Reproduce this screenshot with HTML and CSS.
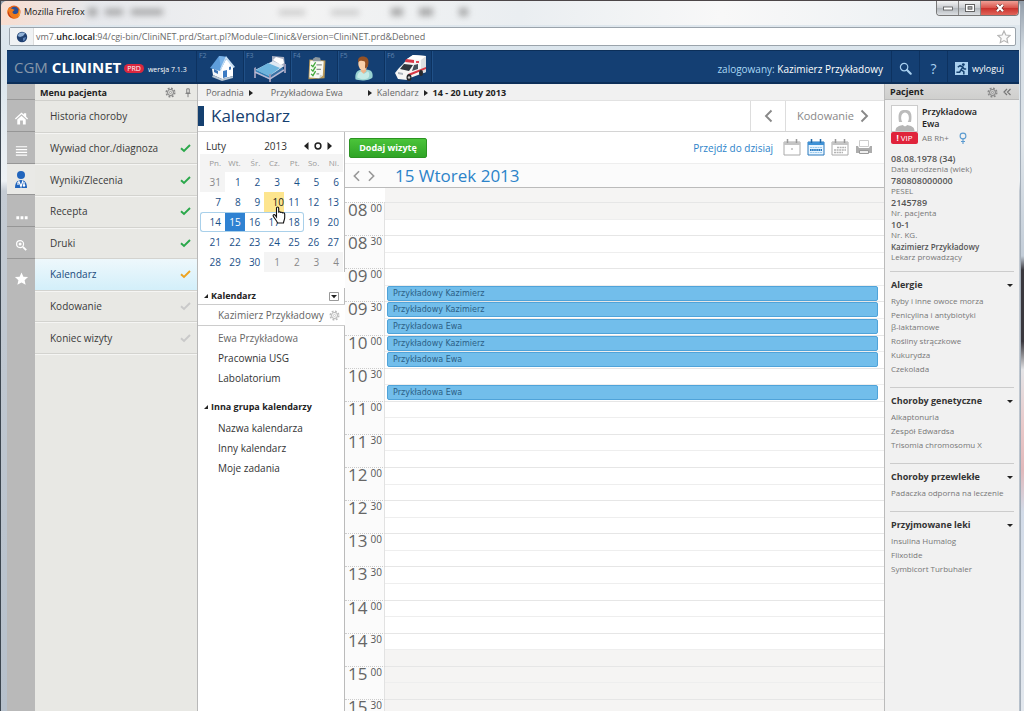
FILE: index.html
```html
<!DOCTYPE html>
<html lang="pl">
<head>
<meta charset="utf-8">
<title>Mozilla Firefox</title>
<link rel="stylesheet" href="styles.css">
</head>
<body>
<svg class="defs" aria-hidden="true">
  <symbol id="gear" viewBox="0 0 12 12"><circle cx="6" cy="6" r="4.6" fill="none" stroke="currentColor" stroke-width="1.8" stroke-dasharray="2 1.61"/><circle cx="6" cy="6" r="3.2" fill="none" stroke="currentColor" stroke-width="1.1"/><circle cx="6" cy="6" r="1.2" fill="none" stroke="currentColor" stroke-width=".8"/></symbol>
  <symbol id="check" viewBox="0 0 11 10"><path d="M1 5.2 4 8 10 2" fill="none" stroke="currentColor" stroke-width="1.9"/></symbol>
  <symbol id="left" viewBox="0 0 9 14"><path d="M7.500 1.500 2 7l5.500 5.500" fill="none" stroke="currentColor" stroke-width="1.9"/></symbol>
  <symbol id="right" viewBox="0 0 9 14"><path d="M1.500 1.500 7 7l-5.500 5.500" fill="none" stroke="currentColor" stroke-width="1.900"/></symbol>
  <symbol id="lens" viewBox="0 0 14 14"><circle cx="5.500" cy="5.500" r="4" fill="none" stroke="currentColor" stroke-width="1.300"/><path d="m8.600 8.600 4 4" stroke="currentColor" stroke-width="2.300" stroke-linecap="round"/></symbol>
</svg>
<div class="window">
  <div class="titlebar">
    <svg class="fox" viewBox="0 0 14 14"><circle cx="7" cy="7" r="6.500" fill="#e8641b"/><circle cx="7.500" cy="6" r="4.300" fill="#2b4f95"/><path d="M1 4c1-2 2-2 2-2l.3 1.500C5 3 6 4.500 7.500 4.800 7 6 5.500 6 5.500 7.500c1 2 4 2 5.500.2.500-1 .4-2 .2-3 2 2 2.600 5 .8 7C9 15 3 14 1 10 0 8 .3 6 1 4z" fill="#ef7a1c"/><path d="M12 3c2 4 1 7-1 9 1-2 2-5 1-9z" fill="#fbc43c"/><path d="M1 6c-.5 4 2 7 6 7.300C3 12 2 9 1 6z" fill="#b7281c"/></svg>
    <span>Mozilla Firefox</span>
    <div class="ghosts" aria-hidden="true"><i></i><i></i><i></i><i></i><i></i><i></i><i></i><i></i></div>
    <div class="controls">
      <button aria-label="Minimalizuj"><svg viewBox="0 0 12 8"><rect x="1.500" y="3" width="9" height="3" fill="#fff" stroke="#555" stroke-width=".8"/></svg></button>
      <button aria-label="Maksymalizuj"><svg viewBox="0 0 12 8"><rect x="1.500" y=".5" width="9" height="7" fill="#fff" stroke="#555" stroke-width=".9"/><rect x="4" y="2.700" width="4" height="2.500" fill="#aaa" stroke="#555" stroke-width=".8"/></svg></button>
      <button class="close" aria-label="Zamknij"><svg viewBox="0 0 12 8"><path d="m3 .8 6 6.400M9 .8 3 7.200" stroke="#6b2b25" stroke-width="3.400"/><path d="m3 .8 6 6.400M9 .8 3 7.200" stroke="#fff" stroke-width="2.200"/></svg></button>
    </div>
  </div>
  <div class="address">
    <span class="site"><svg viewBox="0 0 12 12"><circle cx="6" cy="6" r="5.200" fill="#1f3f70"/><path d="M3 2.500c2-1.500 5-1 6 0L7 5 4 6 1.500 5z" fill="#8fb0d6"/><path d="M7 7l3-1-1 3-2 1z" fill="#5d83b8"/></svg></span>
    <span class="url">vm7.<b>uhc.local</b>:94/cgi-bin/CliniNET.prd/Start.pl?Module=Clinic&amp;Version=CliniNET.prd&amp;Debned</span>
    <button class="fav" aria-label="Zakładka"><svg viewBox="0 0 14 14"><path d="m7 1 1.800 4 4.200.5-3.100 2.900.8 4.300L7 10.600l-3.700 2.100.8-4.300L1 5.500 5.200 5z" fill="#fafafa" stroke="#b5b5b5" stroke-width="1.200"/></svg></button>
  </div>
  <header class="top">
    <div class="brand"><span class="cgm">CGM</span><span class="name">CLININET</span><span class="prd">PRD</span><span class="ver">wersja 7.1.3</span></div>
    <button class="app" aria-label="Dom"><kbd>F2</kbd><svg viewBox="0 0 28 28"><path d="M3 15 4 21l9 4 11-4V12L17 5z" fill="#f4f7fa"/><path d="m13 13 5-8 6 8v9l-11 3z" fill="#fff"/><path d="M1 14 10 2l8 1-6 12-1 2z" fill="#5e9ddb"/><path d="m10 2 8 1-6 12z" fill="#78b2e8"/><path d="M17 2l9 11-2 1-7-9-5 11-1-1z" fill="#c7dff4"/><path d="M14 17l4-1v7l-4 1z" fill="#3c7ac2"/><path d="M5 15l4 2v3l-4-2zM20 13l2-.5v3l-2 .5z" fill="#3d74b4"/><path d="m4 21 9 4 11-3v2l-11 3-10-4z" fill="#b9c7d4"/></svg></button>
    <button class="app" aria-label="Oddział"><kbd>F3</kbd><svg class="bed" viewBox="0 0 34 28"><path d="M19 2l12 1 1 9-3 1-10-5z" fill="#aab0c2"/><path d="M2 16 20 7l11 5-14 11z" fill="#dfe9f3"/><path d="M3 16 15 9l12 5-11 8z" fill="#6db4dd"/><path d="m3 16 13 6v3L3 19z" fill="#3282b8"/><path d="m16 22 14-9v3l-14 10z" fill="#3b72a6"/><path d="m20 6 3-3 7 2 1 4-3 2z" fill="#fff"/><path d="M1 14l2-1v11H1zM16 20h2v8h-2zM31 10h2v9h-2z" fill="#9296b6"/><path d="m2 18 15 7 14-9" fill="none" stroke="#b8b9d4" stroke-width="1.500"/></svg></button>
    <button class="app" aria-label="Zlecenia"><kbd>F4</kbd><svg class="list" viewBox="0 0 28 28"><path d="m6 4 18 1-1 20-18 1z" fill="#b99a5a"/><path d="m7 5 15 1-1 16-4 3-11-1z" fill="#f9faf5"/><path d="m17 25 1-4 3 1z" fill="#cfd6cf"/><path d="m10 3 3-2 5 1 1 4h-9z" fill="#8f99a0"/><path d="m8 10 2 2 3-5M8 15l2 2 3-5M8 20l2 2 3-5" fill="none" stroke="#42a83c" stroke-width="1.500"/><path d="M14 10h6M14 15h5M14 20h3" stroke="#8c9490" stroke-width="1.300"/></svg></button>
    <button class="app" aria-label="Pacjent"><kbd>F5</kbd><svg class="list" viewBox="0 0 28 28"><path d="M5 26c-1-7 2-11 8-11h4c6 0 8 4 7 9-3 4-15 4-19 2z" fill="#98d2d1"/><path d="M7 24c0-4 2-7 6-7l2 3 4-3c2 2 2 6 0 8-5 2-8 1-12-1z" fill="#c5ebe7"/><path d="M11 14h6v3l-3 3-3-3z" fill="#eeb48c"/><ellipse cx="13.500" cy="9" rx="5.300" ry="7" fill="#f8cfaa"/><path d="M8 7c-1-6 4-7 8-6 5 1 4 9 2 12l-2 1c-1-3 1-6-1-8-3-1-5-1-7 1z" fill="#945125"/></svg></button>
    <button class="app" aria-label="Karetka"><kbd>F6</kbd><svg class="bed" viewBox="0 0 34 28"><path d="M13 5 19 1l13 1v16l-16 6-3 2-9-1-3-6 4-5 5-5z" fill="#f6f6f5"/><path d="m13 5 6-4 13 1-5 4z" fill="#fff"/><path d="M27 6l5-4v16l-5 2z" fill="#dedfe1"/><path d="m10 10 9 1-4 6-9-2z" fill="#30363d"/><path d="m20 11 4-1v5l-6 2z" fill="#48515a"/><path d="m12 5 8 1v3l-9-1zM14 20l18-7v2l-17 7z" fill="#d93846"/><path d="m4 18 5 1v2l-5-1z" fill="#aeb5bd"/><path d="M22 7h3v2h-3z" fill="#e14856"/><ellipse cx="15" cy="23.500" rx="2.500" ry="3.500" fill="#292a2d"/><ellipse cx="27" cy="19" rx="2" ry="3" fill="#292a2d"/><circle cx="15" cy="23.500" r="1.200" fill="#ccc"/></svg></button>
    <p class="user"><span>zalogowany:</span> Kazimierz Przykładowy</p>
    <button class="tool" aria-label="Szukaj"><svg viewBox="0 0 14 14"><use href="#lens"/></svg></button>
    <button class="tool help">?</button>
    <button class="tool logout"><svg viewBox="0 0 14 14"><path d="M0 0h14v14H0z" fill="#a9d0f0"/><circle cx="9" cy="2.800" r="1.500" fill="#15406f"/><path d="M3 5.500 5.500 4l3 1.500-2 3 3 2v3M6.500 8.500 5 11H1.500M8 5.500 10 7.500h2" fill="none" stroke="#15406f" stroke-width="1.600"/></svg>wyloguj</button>
  </header>
  <div class="body">
    <nav class="rail" aria-label="Moduły">
      <span class="cap"></span>
      <button aria-label="Start"><svg viewBox="0 0 16 16"><path d="M1 8 8 1.500l2.500 2.300V2.500H13v3.600L15 8l-1 1-6-5.500L2 9z" fill="#fff"/><path d="m3.500 9 4.500-4 4.500 4v5.500h-3V10h-3v4.500h-3z" fill="#fff"/></svg></button>
      <button aria-label="Lista"><svg viewBox="0 0 16 16"><path d="M2 4h12M2 7h12M2 10h12M2 13h12" stroke="#fff" stroke-width="1.300"/></svg></button>
      <button class="on" aria-label="Pacjent"><svg viewBox="0 0 16 20"><circle cx="8" cy="5" r="4" fill="#2165bd"/><path d="M2 18c0-5 2-8 6-8s6 3 6 8z" fill="#2165bd"/><path d="m5.500 10.500 2.500 6 2-6M5 12v3M11 12v3" fill="none" stroke="#fff" stroke-width="1.200"/><circle cx="11" cy="15.500" r="1.200" fill="#fff"/></svg></button>
      <button aria-label="Więcej"><svg viewBox="0 0 16 16"><path d="M2.500 11h3v3h-3zM7 11h3v3H7zM11.500 11h3v3h-3z" fill="#fff"/></svg></button>
      <button aria-label="Szukaj"><svg viewBox="0 0 16 16"><circle cx="6.500" cy="6.500" r="3.700" fill="none" stroke="#fff" stroke-width="1.300"/><circle cx="6.500" cy="6.500" r="1.600" fill="#fff"/><path d="m9.500 9.500 3.500 3.500" stroke="#fff" stroke-width="2"/></svg></button>
      <button class="last" aria-label="Ulubione"><svg viewBox="0 0 16 16"><path d="m8 1.500 2 4.500 5 .5-3.700 3.300 1.100 4.900L8 12.200l-4.400 2.500 1.100-4.900L1 6.500 6 6z" fill="#fff"/></svg></button>
    </nav>
    <nav class="menu" aria-label="Menu pacjenta">
      <h2 class="panelhead">Menu pacjenta <svg class="g" viewBox="0 0 12 12"><use href="#gear"/></svg><svg class="pin" viewBox="0 0 8 12"><path d="M2.500 1h3v5h-3zM1 6.500h6M4 6.500V11" fill="none" stroke="#777" stroke-width="1.100"/></svg></h2>
      <div class="items">
        <a href="#">Historia choroby</a>
        <a href="#">Wywiad chor./diagnoza<svg class="ok" viewBox="0 0 11 10"><use href="#check"/></svg></a>
        <a href="#">Wyniki/Zlecenia<svg class="ok" viewBox="0 0 11 10"><use href="#check"/></svg></a>
        <a href="#">Recepta<svg class="ok" viewBox="0 0 11 10"><use href="#check"/></svg></a>
        <a href="#">Druki<svg class="ok" viewBox="0 0 11 10"><use href="#check"/></svg></a>
        <a href="#" class="sel">Kalendarz<svg class="warn" viewBox="0 0 11 10"><use href="#check"/></svg></a>
        <a href="#">Kodowanie<svg viewBox="0 0 11 10"><use href="#check"/></svg></a>
        <a href="#">Koniec wizyty<svg viewBox="0 0 11 10"><use href="#check"/></svg></a>
      </div>
    </nav>
    <main>
      <div class="crumbs"><a href="#">Poradnia</a><i></i><a class="who" href="#">Przykładowa Ewa</a><i></i><a href="#">Kalendarz</a><i></i><b>14 - 20 Luty 2013</b></div>
      <div class="heading">
        <h1>Kalendarz</h1>
        <button class="prev" aria-label="Wstecz"><svg viewBox="0 0 9 14"><use href="#left"/></svg></button>
        <button class="next">Kodowanie<svg viewBox="0 0 9 14"><use href="#right"/></svg></button>
      </div>
      <div class="split">
        <aside class="side">
          <div class="month"><span>Luty</span><span class="year">2013</span>
            <button aria-label="Poprzedni miesiąc"><svg viewBox="0 0 6 8"><path d="M5.500 0v8L1 4z" fill="#222"/></svg></button>
            <button aria-label="Dzisiaj"><svg viewBox="0 0 8 8"><circle cx="4" cy="4" r="2.900" fill="none" stroke="#222" stroke-width="1.500"/></svg></button>
            <button aria-label="Następny miesiąc"><svg viewBox="0 0 6 8"><path d="M.5 0v8L5 4z" fill="#222"/></svg></button>
          </div>
          <table class="days">
            <thead><tr><th>Pn.</th><th>Wt.</th><th>Śr.</th><th>Cz.</th><th>Pt.</th><th>So.</th><th>Ni.</th></tr></thead>
            <tbody>
              <tr><td class="out">31</td><td>1</td><td>2</td><td>3</td><td>4</td><td>5</td><td>6</td></tr>
              <tr><td>7</td><td>8</td><td>9</td><td class="hover">10<svg class="hand" viewBox="0 0 14 18"><path d="M4.500 11V2.200c0-1.600 2.200-1.600 2.200 0v4.600c0-1.400 2.100-1.300 2.100.2 0-1.200 2-1.100 2 .4 0-1 1.900-.9 1.900.7v3.500c0 2-1 3-1.200 5.400H5.500C5 15 2.500 12.500 1.300 10.300c-.8-1.500 1-2.300 1.900-1.100z" fill="#fff" stroke="#111" stroke-width="1.100"/></svg></td><td>11</td><td>12</td><td>13</td></tr>
              <tr class="week"><td>14</td><td class="today">15</td><td>16</td><td>17</td><td class="end">18</td><td>19</td><td>20</td></tr>
              <tr><td>21</td><td>22</td><td>23</td><td>24</td><td>25</td><td>26</td><td>27</td></tr>
              <tr><td>28</td><td>29</td><td>30</td><td class="out">1</td><td class="out">2</td><td class="out">3</td><td class="out">4</td></tr>
            </tbody>
          </table>
          <section class="group">
            <h3><i></i>Kalendarz<button aria-label="Rozwiń"><svg viewBox="0 0 10 9"><path d="M.5.500h9v8h-9z" fill="#fff" stroke="#999" stroke-width="1"/><path d="M2 3h6L5 6.200z" fill="#222"/></svg></button></h3>
            <a href="#" class="active">Kazimierz Przykładowy<svg viewBox="0 0 12 12"><use href="#gear"/></svg></a>
            <div class="rest"><a href="#" class="wide">Ewa Przykładowa</a><a href="#">Pracownia USG</a><a href="#">Labolatorium</a></div>
          </section>
          <section class="group second">
            <h3><i></i>Inna grupa kalendarzy</h3>
            <div class="rest"><a href="#">Nazwa kalendarza</a><a href="#">Inny kalendarz</a><a href="#">Moje zadania</a></div>
          </section>
        </aside>
        <section class="plan">
          <div class="bar">
            <button class="add">Dodaj wizytę</button>
            <a href="#">Przejdź do dzisiaj</a>
            <button aria-label="Dzień"><svg viewBox="0 0 18 17"><path d="M1 3h16v13H1z" fill="#fff" stroke="#aaa"/><path d="M1 3h16v3H1z" fill="#c4c4c4"/><path d="M4.500 0v4M13.500 0v4" stroke="#999" stroke-width="1.500"/><path d="M8 9h2v2H8z" fill="#ccc"/></svg></button>
            <button aria-label="Tydzień"><svg viewBox="0 0 18 17"><path d="M1 3h16v13H1z" fill="#e9f5ff" stroke="#2878bd"/><path d="M1 3h16v3H1z" fill="#3e91d6"/><path d="M4.500 0v4M13.500 0v4" stroke="#2369a6" stroke-width="1.500"/><path d="M3 8.500h12M3 13.500h12" stroke="#9ccbed" stroke-dasharray="2 .5"/><path d="M3 11h12" stroke="#2a7bc0" stroke-width="2" stroke-dasharray="1.600 .5"/></svg></button>
            <button aria-label="Miesiąc"><svg viewBox="0 0 18 17"><path d="M1 3h16v13H1z" fill="#fff" stroke="#aaa"/><path d="M1 3h16v3H1z" fill="#c4c4c4"/><path d="M4.500 0v4M13.500 0v4" stroke="#999" stroke-width="1.500"/><path d="M6 8.500h9M3 11h12M3 13.500h9" stroke="#b3b3b3" stroke-width="1.500" stroke-dasharray="2 .6"/></svg></button>
            <button aria-label="Drukuj"><svg viewBox="0 0 18 17"><path d="M4.500 1.500h9v6h-9z" fill="#fff" stroke="#ccc"/><path d="M1 7h2l1 2h10l1-2h2v7H1z" fill="#adadad"/><path d="M4.500 11.500h9v3h-9z" fill="#eee" stroke="#999"/></svg></button>
          </div>
          <div class="dayhead">
            <button aria-label="Poprzedni dzień"><svg viewBox="0 0 9 14"><use href="#left"/></svg></button>
            <button aria-label="Następny dzień"><svg viewBox="0 0 9 14"><use href="#right"/></svg></button>
            <h2>15 Wtorek 2013</h2>
          </div>
          <div class="sched">
            <div class="lead"></div>
            <div class="rows">
              <div class="row"><time>08<sup>00</sup></time><div class="slot off"></div><div class="slot"></div></div>
              <div class="row"><time>08<sup>30</sup></time><div class="slot"></div><div class="slot"></div></div>
              <div class="row"><time>09<sup>00</sup></time><div class="slot"></div><div class="slot"><button>Przykładowy Kazimierz</button></div></div>
              <div class="row"><time>09<sup>30</sup></time><div class="slot"><button>Przykładowy Kazimierz</button></div><div class="slot"><button>Przykładowa Ewa</button></div></div>
              <div class="row"><time>10<sup>00</sup></time><div class="slot"><button>Przykładowy Kazimierz</button></div><div class="slot"><button>Przykładowa Ewa</button></div></div>
              <div class="row"><time>10<sup>30</sup></time><div class="slot"></div><div class="slot"><button>Przykładowa Ewa</button></div></div>
              <div class="row"><time>11<sup>00</sup></time><div class="slot"></div><div class="slot"></div></div>
              <div class="row"><time>11<sup>30</sup></time><div class="slot"></div><div class="slot"></div></div>
              <div class="row"><time>12<sup>00</sup></time><div class="slot"></div><div class="slot"></div></div>
              <div class="row"><time>12<sup>30</sup></time><div class="slot"></div><div class="slot"></div></div>
              <div class="row"><time>13<sup>00</sup></time><div class="slot"></div><div class="slot"></div></div>
              <div class="row"><time>13<sup>30</sup></time><div class="slot"></div><div class="slot"></div></div>
              <div class="row"><time>14<sup>00</sup></time><div class="slot"></div><div class="slot"></div></div>
              <div class="row"><time>14<sup>30</sup></time><div class="slot"></div><div class="slot off"></div></div>
              <div class="row"><time>15<sup>00</sup></time><div class="slot off"></div><div class="slot off"></div></div>
              <div class="row"><time>15<sup>30</sup></time><div class="slot off"></div><div class="slot off"></div></div>
            </div>
          </div>
        </section>
      </div>
    </main>
    <aside class="patient">
      <h2 class="panelhead">Pacjent <svg class="g" viewBox="0 0 12 12"><use href="#gear"/></svg><svg class="fold" viewBox="0 0 8 8"><path d="M4 1 1 4l3 3M7.500 1l-3 3 3 3" fill="none" stroke="#777" stroke-width="1.200"/></svg></h2>
      <div class="card">
        <div class="photo"><svg viewBox="0 0 22 22"><path d="M5 13C3 1 8 1 11 1s8 0 6 12z" fill="#bbb"/><ellipse cx="11" cy="9" rx="3.900" ry="5.500" fill="#fff"/><path d="M9 13h4v4H9z" fill="#fff"/><path d="M1.500 22c0-4 3-5 7-6l2.500 1.500L13.500 16c4 1 7 2 7 6z" fill="#b5b5b5"/></svg></div>
        <strong>Przykładowa<br>Ewa</strong>
        <span class="vip"><b>!</b> VIP</span>
        <span class="blood">AB Rh+ <svg viewBox="0 0 8 12"><circle cx="4" cy="4" r="2.900" fill="none" stroke="#5b9bd0" stroke-width="1.100"/><path d="M4 7v5M2 9.500h4" stroke="#5b9bd0" stroke-width="1.100"/></svg></span>
      </div>
      <dl>
        <div><dt>Data urodzenia (wiek)</dt><dd>08.08.1978 (34)</dd></div>
        <div><dt>PESEL</dt><dd>780808000000</dd></div>
        <div><dt>Nr. pacjenta</dt><dd>2145789</dd></div>
        <div><dt>Nr. KG.</dt><dd>10-1</dd></div>
        <div><dt>Lekarz prowadzący</dt><dd class="doc">Kazimierz Przykładowy</dd></div>
      </dl>
      <section><h3>Alergie</h3><ul><li>Ryby i inne owoce morza</li><li>Penicylina i antybiotyki<br>β-laktamowe</li><li>Rośliny strączkowe</li><li>Kukurydza</li><li>Czekolada</li></ul></section>
      <section><h3>Choroby genetyczne</h3><ul><li>Alkaptonuria</li><li>Zespół Edwardsa</li><li>Trisomia chromosomu X</li></ul></section>
      <section><h3>Choroby przewlekłe</h3><ul><li>Padaczka odporna na leczenie</li></ul></section>
      <section><h3>Przyjmowane leki</h3><ul><li>Insulina Humalog</li><li>Flixotide</li><li>Symbicort Turbuhaler</li></ul></section>
    </aside>
  </div>
</div>
</body>
</html>
```
FILE: styles.css
```css
* { box-sizing: border-box; }
body { margin: 0; height: 100vh; overflow: hidden; font: 10px/12px "Open Sans", "Noto Sans", sans-serif; color: #444; background: linear-gradient(#8f9aa6 0, #d5dde4 50px, #dfe5ea 20%, #c3cdd8 36%, #39373d 38%, #39373d 48%, #e4e4e6 52%, #e9c9c9 60%, #e2b9bb 66%, #d2dbe8 72%, #e3e8ee 100%); border-left: 1px solid #3c4650; border-top: 1px solid #4c4648; }
button { font: inherit; color: inherit; background: none; border: 0; padding: 0; margin: 0; cursor: pointer; display: flex; align-items: center; justify-content: center; }
a { color: inherit; text-decoration: none; }
h1, h2, h3, p, ul, dl, dd { margin: 0; padding: 0; list-style: none; }
svg { display: block; flex: none; }
.defs { position: absolute; width: 0; height: 0; }
.window { height: 100%; margin-right: 3px; padding: 0 1px 0 6px; border: 1px solid #a3adb8; border-width: 0 1px 0 0; border-radius: 6px 6px 0 0; display: flex; flex-direction: column; background: linear-gradient(90deg, #f8ddd0 0, #e6e8ec 90px, #f3f3f3 300px, #eaeef1 520px, #f8f8f8 720px, #e9eef2 100%) 0 0 / 100% 24px no-repeat, linear-gradient(#e3e9ee 0, #d9e4ec 60px, #eef2f5 180px, #c4cbd3 190px, #b6c0cb 100%); }
.titlebar { display: flex; align-items: center; gap: 3px; height: 22px; font-size: 9px; color: #111; }
.fox { width: 14px; height: 14px; }
.ghosts { display: flex; align-items: center; gap: 8px; flex: 1; filter: blur(3px); }
.ghosts i { width: 9px; height: 8px; background: #888; opacity: .7; }
.ghosts i:nth-child(2) { width: 18px; height: 6px; }
.ghosts i:nth-child(3) { width: 32px; height: 6px; margin-right: 108px; }
.ghosts i:nth-child(4) { width: 26px; height: 5px; opacity: .4; margin-right: 18px; }
.ghosts i:nth-child(5) { width: 28px; height: 5px; opacity: .4; margin-right: 24px; }
.ghosts i:nth-child(6) { width: 12px; margin-right: 8px; }
.ghosts i:nth-child(7) { width: 14px; margin-right: 18px; }
.controls { display: flex; align-self: flex-start; height: 15px; border: 1px solid #777; border-top: 0; border-radius: 0 0 4px 4px; overflow: hidden; }
.controls button { width: 22px; background: linear-gradient(#f4f4f4, #c9ccd0 50%, #b1b6bb 50%, #dcdfe2); border-right: 1px solid #888; }
.controls .close { width: 37px; border: 0; background: linear-gradient(#f0a096, #d9534a 50%, #c9302a 50%, #e0645a); }
.controls svg { width: 12px; height: 8px; }
.address { display: flex; align-items: center; height: 19px; margin: 4px 3px 4px 2px; background: #fff; border: 1px solid #9aa3ab; border-radius: 2px; font-size: 9px; color: #6a6a6a; }
.site { height: 100%; width: 24px; display: grid; place-items: center; background: #f0f2f4; border-right: 1px solid #ddd; margin-right: 2px; }
.site svg { width: 12px; height: 12px; }
.url b { font-weight: 600; color: #222; }
.url { flex: 1; }
.fav svg { width: 14px; height: 14px; margin-right: 4px; }
.top { display: flex; height: 34px; flex: none; background: #143f73; border: 1px solid #0c2f59; border-width: 1px 0 2px; color: #fff; }
.brand { display: flex; align-items: center; width: 190px; padding-left: 7px; border-right: 1px solid #0d3260; white-space: nowrap; }
.brand .cgm, .brand .name { font-size: 15px; line-height: 20px; color: #8797a9; }
.brand .name { color: #fff; font-weight: 700; margin-left: 4px; }
.prd { background: #d9273f; border-radius: 5px; padding: 0 3px; font-size: 7px; line-height: 9px; margin: 3px 4px 0 3px; }
.ver { font-size: 7px; padding-top: 7px; }
.app { position: relative; width: 47px; border-right: 1px solid #0d3260; box-shadow: 1px 0 #205087; }
.app kbd { position: absolute; left: 2px; top: 1px; font: 7px/8px "Open Sans", sans-serif; color: #5c82ad; }
.app svg { width: 28px; height: 28px; margin: 3px 0 0 5px; }
.app .bed { width: 34px; }
.app .list { width: 25px; height: 25px; }
.user { margin-left: auto; align-self: center; padding-right: 8px; padding-top: 5px; font-size: 10px; }
.user span { color: #a9d8f5; }
.tool { width: 28px; border-left: 1px solid #0d3260; font-size: 14px; color: #a9d0f0; padding-top: 4px; }
.tool svg { width: 13px; height: 13px; }
.logout { width: 72px; font-size: 9px; gap: 4px; color: #fff; padding-right: 8px; }
.body { flex: 1; min-height: 0; display: flex; background: #fff; }
.rail { width: 28px; background: #b9b9b9; display: flex; flex-direction: column; }
.cap { height: 16px; border-bottom: 1px solid #999; }
.rail button { height: 32px; border-bottom: 1px solid #969696; padding-top: 6px; }
.rail button svg { width: 15px; height: 15px; }
.rail .on { background: #e9e9e6; padding: 2px 0 0; height: 31px; }
.rail .on svg { width: 16px; height: 20px; }
.rail .last { border: 0; }
.menu { width: 163px; background: #e8e8e4; border-right: 1px solid #b8b8b8; }
.panelhead { display: flex; align-items: center; height: 16px; font-size: 9px; font-weight: 700; color: #222; padding: 1px 5px 0; }
.g { width: 11px; height: 11px; margin-left: auto; color: #888; }
.pin { width: 8px; height: 10px; margin-left: 8px; }
.items { display: grid; grid-auto-rows: 1fr; min-height: 254px; border-top: 1px solid #d0d0cc; }
.items a { display: flex; align-items: center; justify-content: space-between; padding: 0 6px 0 15px; border-bottom: 1px solid #d3d3cf; box-shadow: 0 1px #f5f5f3; color: #3a3a3a; }
.items svg { width: 11px; height: 10px; color: #c9c9c9; }
.items .ok { color: #2aa84a; }
.items .warn { color: #eda320; }
.items .sel { background: linear-gradient(#eef8fc, #d3effa); color: #1b4a7b; }
main { flex: 1; min-width: 0; display: flex; flex-direction: column; }
.crumbs { display: flex; align-items: center; gap: 5px; height: 17px; flex: none; background: #f1f1f1; border-bottom: 1px solid #e2e2e2; padding: 1px 0 0 8px; font-size: 9px; color: #666; }
.crumbs i { border: 3px solid transparent; border-left: 4px solid #222; border-right: 0; }
.crumbs .who { margin: 0 20px 0 13px; }
.crumbs b { color: #222; }
.heading { display: flex; height: 31px; flex: none; border-bottom: 1px solid #d4d4d4; }
h1 { flex: 1; align-self: center; font-size: 17px; line-height: 20px; font-weight: 400; color: #15406f; border-left: 6px solid #15406f; padding-left: 7px; }
.heading button { border-left: 1px solid #ddd; color: #888; }
.heading svg { width: 9px; height: 14px; }
.prev { width: 35px; }
.next { width: 99px; gap: 6px; font-size: 11px; padding-right: 4px; }
.split { flex: 1; display: flex; min-height: 0; }
.side { width: 147px; display: flex; flex-direction: column; }
.side > * { border-right: 1px solid #bbb; }
.month { display: flex; align-items: center; gap: 4px; height: 22px; padding: 5px 10px 0 8px; color: #333; }
.month .year { margin-left: auto; margin-right: 11px; }
.month svg { height: 8px; width: 8px; }
.days { border-collapse: separate; border-spacing: 0; table-layout: fixed; width: 100%; padding: 0 1px 0 2px; font-size: 10px; color: #1a5088; }
.days th { font-size: 8px; font-weight: 400; color: #999; background: #f4f4f4; height: 18px; padding: 0 4px 0 0; text-align: right; }
.days th:first-child { width: 25px; }
.days td { height: 20px; line-height: 18px; padding: 0 4px 0 0; text-align: right; border: solid transparent; border-width: 1px 0; position: relative; }
.days .out { background: #f4f4f4; color: #888; }
.days .hover { background: #fde58e; color: #222; padding: 0; }
.days .today { background: #2f82d2; background-clip: padding-box; color: #fff; }
.week td:nth-child(-n+5) { border-color: #a9d0ea; }
.week td:first-child { border-left: 1px solid #a9d0ea; border-radius: 3px 0 0 3px; }
.week .end { border-right: 1px solid #a9d0ea; border-radius: 0 3px 3px 0; padding-right: 3px; }
.hand { position: absolute; left: 8px; top: 13px; width: 14px; height: 18px; z-index: 2; }
.side .group { border: 0; padding: 16px 0 0; }
.group h3 { display: flex; align-items: center; height: 16px; padding: 0 5px 0 6px; font-size: 9px; color: #222; border-right: 1px solid #bbb; }
.group h3 i { border: 2px solid transparent; border-right-color: #222; border-bottom-color: #222; margin-right: 3px; }
.group h3 button { margin-left: auto; }
.group h3 svg { width: 10px; height: 9px; }
.group a { display: flex; align-items: center; height: 20px; padding-left: 20px; color: #333; }
.group .active { color: #666; justify-content: space-between; padding-right: 5px; border: 1px solid #ccc; border-width: 1px 0; height: 22px; }
.active svg { width: 11px; height: 11px; color: #bbb; }
.group .wide { color: #666; }
.rest { border-right: 1px solid #bbb; padding-top: 2px; }
.side .second { flex: 1; padding-top: 0; display: flex; flex-direction: column; }
.second h3 { padding-top: 10px; height: 28px; }
.second .rest { flex: 1; }
.plan { flex: 1; min-width: 0; display: flex; flex-direction: column; }
.bar { display: flex; align-items: center; gap: 6px; height: 31px; flex: none; padding: 0 11px 0 4px; }
.add { background: linear-gradient(#4bc43a, #2fa426); border: 1px solid #2b9322; border-radius: 2px; color: #fff; font-weight: 700; font-size: 9px; width: 78px; height: 20px; }
.bar a { color: #2c83c9; margin: 0 4px 0 auto; }
.bar svg { width: 18px; height: 17px; }
.dayhead { display: flex; align-items: center; height: 25px; flex: none; padding-left: 7px; gap: 6px; background: #fbfbfb; border-top: 1px solid #eee; border-bottom: 1px solid #bbb; color: #999; }
.dayhead svg { width: 9px; height: 12px; }
.dayhead h2 { font-size: 17px; line-height: 20px; font-weight: 400; color: #2c83c9; margin-left: 13px; }
.sched { flex: 1; min-height: 0; overflow: hidden; }
.lead { height: 14px; margin-left: 40px; background: #f5f4f3; }
.rows { display: grid; grid-auto-rows: 1fr; min-height: 530px; }
.row { display: grid; grid-template: 1fr 1fr / 40px 1fr; }
time { grid-row: 1 / 3; background: #fbfbfb; border-top: 1px dotted #ccc; border-right: 1px solid #e2e2e2; padding: 0 2px 0 3px; display: flex; justify-content: space-between; font-size: 17px; line-height: 14px; color: #666; }
sup { font-size: 10px; line-height: 10px; color: #555; }
.slot { border-top: 1px solid #e6e6e6; padding: 0 6px 0 2px; }
.slot + .slot { border-color: #eee; }
.off { background: #f5f4f3; }
.slot button { width: 100%; height: 15px; justify-content: flex-start; padding: 1px 0 0 5px; background: #72beeb; border: 1px solid #4fa3d9; border-radius: 2px; color: #2c5f86; font: 8px/12px "DejaVu Sans", sans-serif; }
.patient { width: 135px; background: #f1f1f1; border-left: 1px solid #bbb; overflow: hidden; font-size: 8px; color: #777; padding-bottom: 10px; }
.patient .panelhead { background: linear-gradient(#d9d9d9, #cfcfcd); border-bottom: 1px solid #bbb; padding-right: 8px; }
.fold { width: 8px; height: 8px; margin-left: 5px; }
.card { display: grid; grid-template-columns: 27px 1fr; column-gap: 4px; row-gap: 0; padding: 5px 5px 0 6px; }
.photo { border: 1px solid #ccc; background: #fff; height: 27px; display: grid; place-items: end center; }
.photo svg { width: 22px; height: 22px; }
.card strong { padding-top: 1px; font-size: 9px; font-weight: 600; color: #222; }
.vip { background: #e0233b; color: #fff; border-radius: 2px; line-height: 11px; text-align: center; white-space: nowrap; }
.blood { display: flex; align-items: center; gap: 10px; }
.blood svg { width: 8px; height: 12px; }
dl { padding: 10px 6px 10px; display: grid; gap: 3px; }
dl div { display: flex; flex-direction: column-reverse; }
dt { line-height: 9px; white-space: nowrap; }
dd { line-height: 10px; font-size: 9px; font-weight: 600; color: #555; }
.doc { font-size: 8px; white-space: nowrap; }
.patient section { margin: 0 5px; padding: 4px 1px 11px; border-top: 1px solid #ccc; }
.patient h3 { display: flex; justify-content: space-between; align-items: center; font-size: 9px; line-height: 18px; color: #333; white-space: nowrap; }
.patient h3::after { content: ""; border: 3px solid transparent; border-top-color: #222; border-bottom: 0; }
.patient li { line-height: 12px; padding: 1px 0; white-space: nowrap; }
```
